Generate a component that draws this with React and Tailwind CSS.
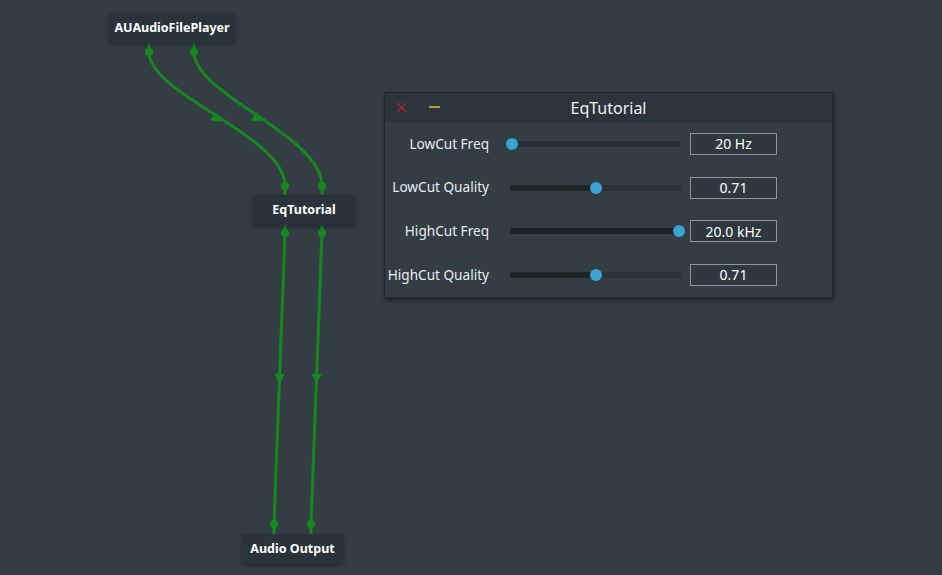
import React from "react";

const font = { fontFamily: '"Noto Sans", "DejaVu Sans", sans-serif' };

function Node({ x, y, w, label }) {
  return (
    <div
      className="absolute h-[30px] flex items-center justify-center bg-[#2a3339] rounded-[2px] shadow-[0_2px_4px_rgba(0,0,0,0.35)] text-white font-bold text-[12.5px]"
      style={{ left: x, top: y, width: w }}
    >
      {label}
    </div>
  );
}

function Wires() {
  const g = "#15891f";
  const arrow = (x, y, angle) => (
    <polygon
      points="0,5 -5,-5 5,-5"
      fill={g}
      transform={`translate(${x},${y}) rotate(${angle})`}
    />
  );
  return (
    <svg className="absolute left-0 top-0" width="942" height="575">
      <g stroke={g} strokeWidth="3" fill="none">
        <line x1="149" y1="43" x2="149" y2="52" />
        <line x1="194" y1="43" x2="194" y2="52" />
        <line x1="285" y1="186" x2="285" y2="195" />
        <line x1="322" y1="186" x2="322" y2="195" />
        <line x1="285" y1="225" x2="285" y2="233" />
        <line x1="322" y1="225" x2="322" y2="233" />
        <line x1="274" y1="524" x2="274" y2="534" />
        <line x1="311" y1="524" x2="311" y2="534" />
        <path d="M149 52 C149 95, 285 135, 285 186" />
        <path d="M194 52 C194 95, 322 135, 322 186" />
        <path d="M285 233 L274 524" />
        <path d="M322 233 L311 524" />
      </g>
      {arrow(217, 119, -55)}
      {arrow(258, 119, -55)}
      {arrow(279.5, 379, 2)}
      {arrow(316.5, 379, 2)}
      <g fill={g}>
        <circle cx="149" cy="52" r="4" />
        <circle cx="194" cy="52" r="4" />
        <circle cx="285" cy="186" r="4" />
        <circle cx="322" cy="186" r="4" />
        <circle cx="285" cy="233" r="4" />
        <circle cx="322" cy="233" r="4" />
        <circle cx="274" cy="524" r="4" />
        <circle cx="311" cy="524" r="4" />
      </g>
    </svg>
  );
}

function Row({ label, frac, value }) {
  const pos = Math.round(frac * 167);
  return (
    <div className="flex items-center h-[43.7px]">
      <div className="w-[104px] shrink-0 whitespace-nowrap text-right text-[13.6px] text-[#e8ecee]">{label}</div>
      <div className="relative ml-[21px] w-[171px] h-[12px] flex items-center">
        <div className="absolute left-0 right-0 h-[6px] rounded-full bg-[#283137]" />
        <div
          className="absolute left-0 h-[6px] rounded-l-full bg-[#1d2428]"
          style={{ width: pos + 4 }}
        />
        <div
          className="absolute w-[12px] h-[12px] rounded-full bg-[#3aa3d2]"
          style={{ left: pos - 4 }}
        />
      </div>
      <div className="ml-[9px] w-[87px] h-[22px] border border-[#8c979c] bg-[#2e383e] flex items-center justify-center text-[14px] text-white">
        {value}
      </div>
    </div>
  );
}

function Window() {
  return (
    <div className="absolute left-[384px] top-[92px] w-[449px] h-[206px] bg-[#323d44] border border-[#20282d] shadow-[1px_2px_4px_rgba(0,0,0,0.5)]">
      <div className="h-[29px] bg-[#2a343a] relative flex items-center justify-center">
        <svg className="absolute left-[11px] top-[9px]" width="11" height="11">
          <path d="M1 1 L10 10 M10 1 L1 10" stroke="#b3212b" strokeWidth="1.5" />
        </svg>
        <div className="absolute left-[44px] top-[13px] w-[11px] h-[2px] bg-[#b79f2c]" />
        <span className="text-[16px] text-[#eef1f2]">EqTutorial</span>
      </div>
      <div className="flex flex-col">
        <Row label="LowCut Freq" frac={0} value="20 Hz" />
        <Row label="LowCut Quality" frac={0.5} value="0.71" />
        <Row label="HighCut Freq" frac={1} value="20.0 kHz" />
        <Row label="HighCut Quality" frac={0.5} value="0.71" />
      </div>
    </div>
  );
}

export default function App() {
  return (
    <div className="relative w-[942px] h-[575px] bg-[#343d44] overflow-hidden" style={font}>
      <Wires />
      <Node x={109} y={13} w={126} label="AUAudioFilePlayer" />
      <Node x={253} y={195} w={102} label="EqTutorial" />
      <Node x={242} y={534} w={101} label="Audio Output" />
      <Window />
    </div>
  );
}
